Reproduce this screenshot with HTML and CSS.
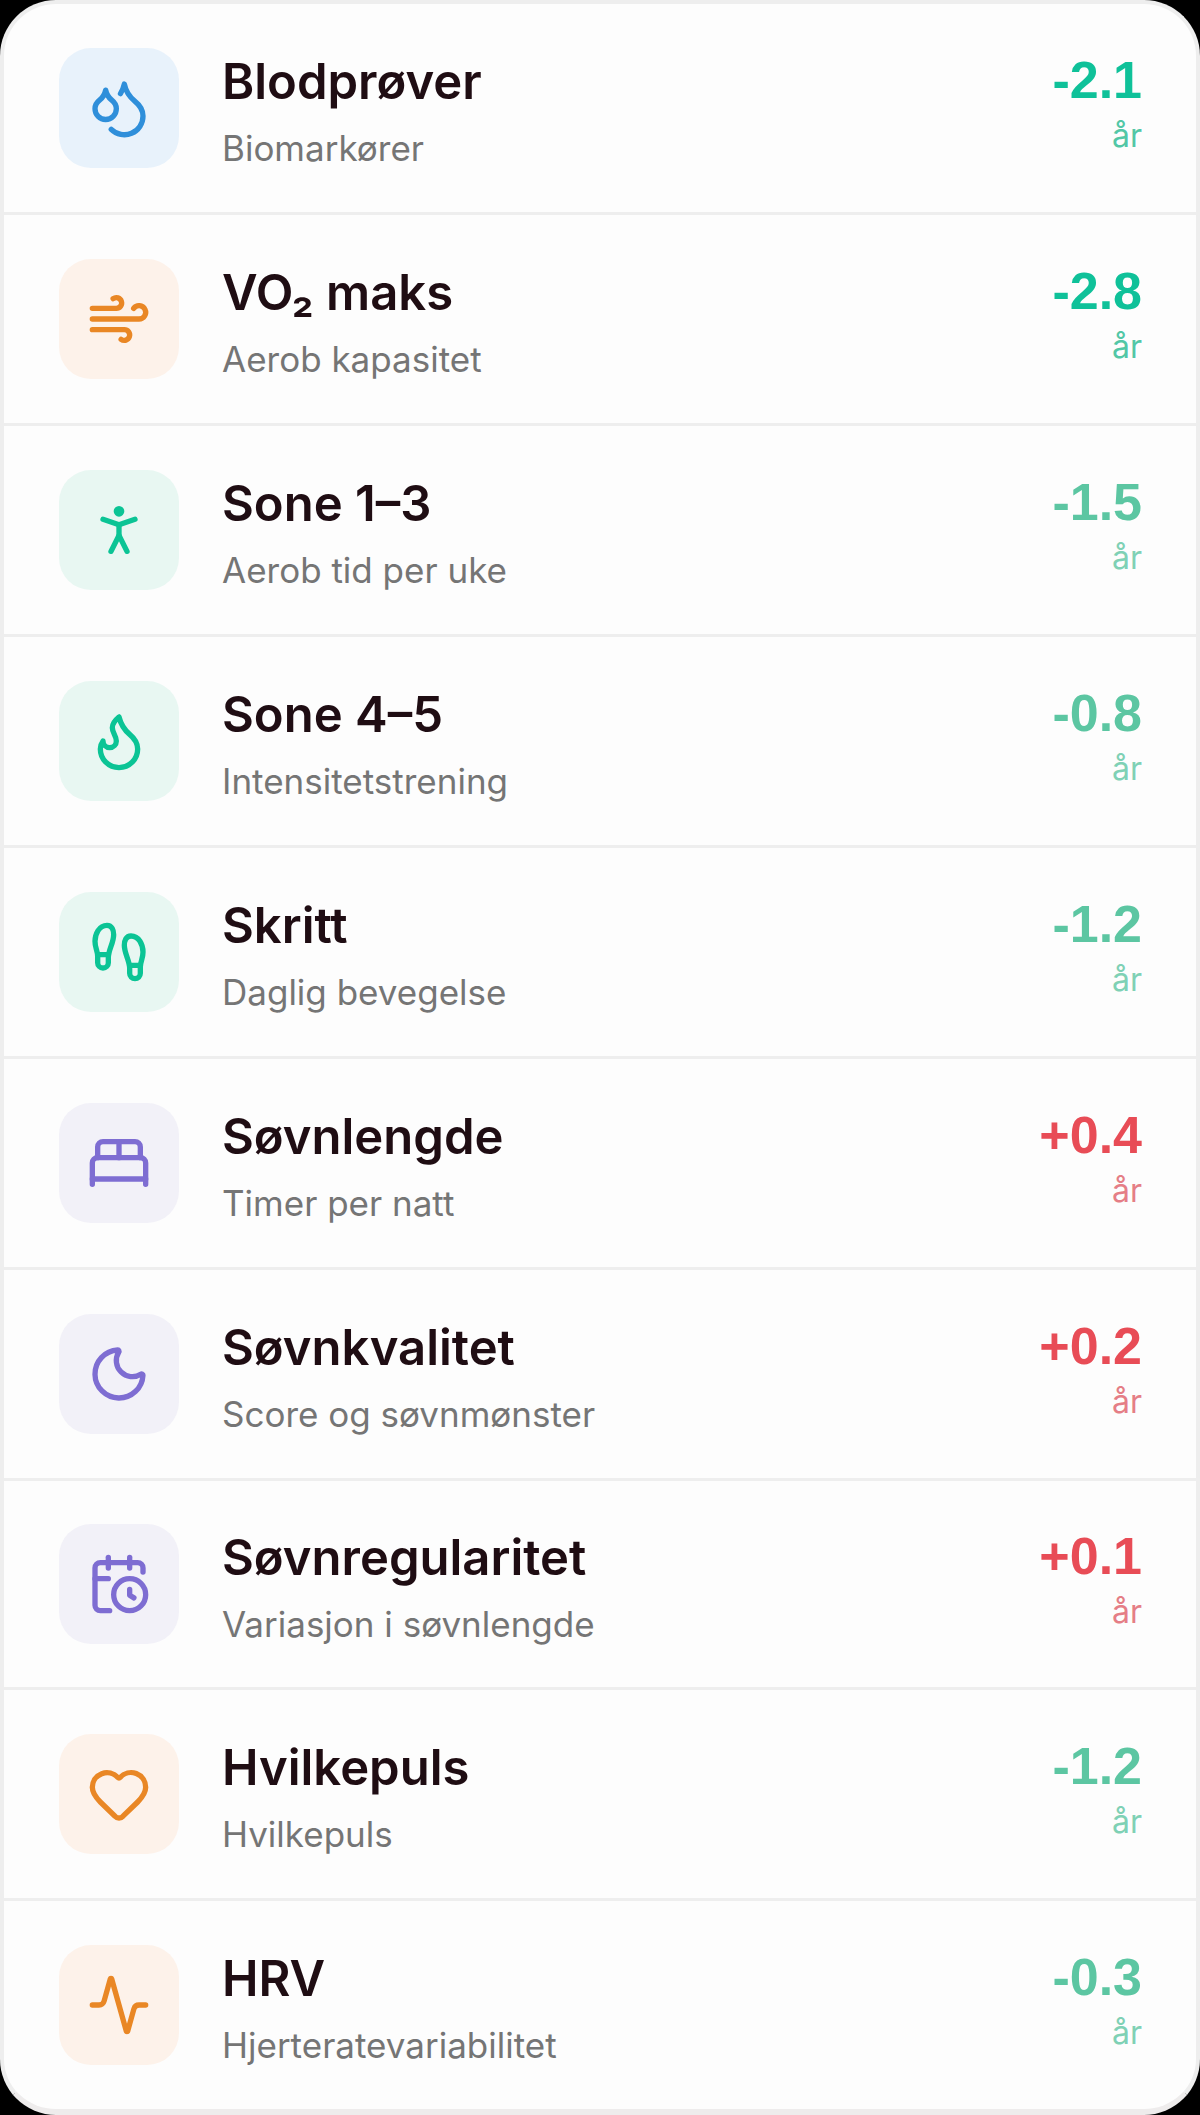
FILE: index.html
```html
<!DOCTYPE html>
<html lang="no">

<head>
    <meta charset="UTF-8">
    <meta name="viewport" content="width=device-width, initial-scale=1.0">
    <link rel="stylesheet" href="styles.css">
    <title>Biologisk alder</title>
</head>

<body>
    <ul class="card">
        <li class="row">
            <div class="icon blue">
                <svg viewBox="0 0 24 24">
                    <path d="M7 16.3c2.2 0 4-1.83 4-4.05 0-1.16-.57-2.26-1.71-3.19S7.29 6.75 7 5.3c-.29 1.45-1.14 2.84-2.29 3.76S3 11.1 3 12.25c0 2.22 1.8 4.05 4 4.05z" />
                    <path d="M12.56 6.6A10.97 10.97 0 0 0 14 3.02c.5 2.5 2 4.9 4 6.5s3 3.5 3 5.5a6.98 6.98 0 0 1-11.91 4.97" />
                </svg>
            </div>
            <div class="info">
                <h2>Blodprøver</h2>
                <p>Biomarkører</p>
            </div>
            <div class="value good">
                <strong>-2.1</strong>
                <span>år</span>
            </div>
        </li>
        <li class="row">
            <div class="icon orange">
                <svg viewBox="0 0 24 24">
                    <path d="M12.8 19.6A2 2 0 1 0 14 16H2" />
                    <path d="M17.5 8a2.5 2.5 0 1 1 2 4H2" />
                    <path d="M9.8 4.4A2 2 0 1 1 11 8H2" />
                </svg>
            </div>
            <div class="info">
                <h2>VO₂ maks</h2>
                <p>Aerob kapasitet</p>
            </div>
            <div class="value good">
                <strong>-2.8</strong>
                <span>år</span>
            </div>
        </li>
        <li class="row">
            <div class="icon green">
                <svg viewBox="0 0 24 24">
                    <circle cx="12" cy="5" r="1" />
                    <path d="m9 20 3-6 3 6" />
                    <path d="m6 8 6 2 6-2" />
                    <path d="M12 10v4" />
                </svg>
            </div>
            <div class="info">
                <h2>Sone 1–3</h2>
                <p>Aerob tid per uke</p>
            </div>
            <div class="value ok">
                <strong>-1.5</strong>
                <span>år</span>
            </div>
        </li>
        <li class="row">
            <div class="icon green">
                <svg viewBox="0 0 24 24">
                    <path d="M12 3q1 4 4 6.5t3 5.5a1 1 0 0 1-14 0 5 5 0 0 1 1-3 1 1 0 0 0 5 0c0-2-1.5-3-1.5-5q0-2 2.5-4" />
                </svg>
            </div>
            <div class="info">
                <h2>Sone 4–5</h2>
                <p>Intensitetstrening</p>
            </div>
            <div class="value ok">
                <strong>-0.8</strong>
                <span>år</span>
            </div>
        </li>
        <li class="row">
            <div class="icon green">
                <svg viewBox="0 0 24 24">
                    <path d="M4 16v-2.38C4 11.5 2.97 10.5 3 8c.03-2.72 1.49-6 4.5-6C9.37 2 10 3.8 10 5.5c0 3.11-2 5.66-2 8.68V16a2 2 0 1 1-4 0Z" />
                    <path d="M20 20v-2.38c0-2.12 1.03-3.12 1-5.62-.03-2.72-1.49-6-4.5-6C14.63 6 14 7.8 14 9.5c0 3.11 2 5.66 2 8.68V20a2 2 0 1 0 4 0Z" />
                    <path d="M16 17h4" />
                    <path d="M4 13h4" />
                </svg>
            </div>
            <div class="info">
                <h2>Skritt</h2>
                <p>Daglig bevegelse</p>
            </div>
            <div class="value ok">
                <strong>-1.2</strong>
                <span>år</span>
            </div>
        </li>
        <li class="row">
            <div class="icon purple">
                <svg viewBox="0 0 24 24">
                    <path d="M2 20v-8a2 2 0 0 1 2-2h16a2 2 0 0 1 2 2v8" />
                    <path d="M4 10V6a2 2 0 0 1 2-2h12a2 2 0 0 1 2 2v4" />
                    <path d="M12 4v6" />
                    <path d="M2 18h20" />
                </svg>
            </div>
            <div class="info">
                <h2>Søvnlengde</h2>
                <p>Timer per natt</p>
            </div>
            <div class="value bad">
                <strong>+0.4</strong>
                <span>år</span>
            </div>
        </li>
        <li class="row">
            <div class="icon purple">
                <svg viewBox="0 0 24 24">
                    <path d="M20.985 12.486a9 9 0 1 1-9.473-9.472c.405-.022.617.46.402.803a6 6 0 0 0 8.268 8.268c.344-.215.825-.004.803.401" />
                </svg>
            </div>
            <div class="info">
                <h2>Søvnkvalitet</h2>
                <p>Score og søvnmønster</p>
            </div>
            <div class="value bad">
                <strong>+0.2</strong>
                <span>år</span>
            </div>
        </li>
        <li class="row tight">
            <div class="icon purple">
                <svg viewBox="0 0 24 24">
                    <path d="M16 14v2.2l1.6 1" />
                    <path d="M16 2v4" />
                    <path d="M21 7.5V6a2 2 0 0 0-2-2H5a2 2 0 0 0-2 2v14a2 2 0 0 0 2 2h3.5" />
                    <path d="M3 10h5" />
                    <path d="M8 2v4" />
                    <circle cx="16" cy="16" r="6" />
                </svg>
            </div>
            <div class="info">
                <h2>Søvnregularitet</h2>
                <p>Variasjon i søvnlengde</p>
            </div>
            <div class="value bad">
                <strong>+0.1</strong>
                <span>år</span>
            </div>
        </li>
        <li class="row">
            <div class="icon orange">
                <svg viewBox="0 0 24 24">
                    <path d="M2 9.5a5.5 5.5 0 0 1 9.591-3.676.56.56 0 0 0 .818 0A5.49 5.49 0 0 1 22 9.5c0 2.29-1.5 4-3 5.5l-5.492 5.313a2 2 0 0 1-3 .019L5 15c-1.5-1.5-3-3.2-3-5.5" />
                </svg>
            </div>
            <div class="info">
                <h2>Hvilkepuls</h2>
                <p>Hvilkepuls</p>
            </div>
            <div class="value ok">
                <strong>-1.2</strong>
                <span>år</span>
            </div>
        </li>
        <li class="row">
            <div class="icon orange">
                <svg viewBox="0 0 24 24">
                    <path d="M22 12h-2.48a2 2 0 0 0-1.93 1.46l-2.35 8.36a.25.25 0 0 1-.48 0L9.24 2.18a.25.25 0 0 0-.48 0l-2.35 8.36A2 2 0 0 1 4.49 12H2" />
                </svg>
            </div>
            <div class="info">
                <h2>HRV</h2>
                <p>Hjerteratevariabilitet</p>
            </div>
            <div class="value ok">
                <strong>-0.3</strong>
                <span>år</span>
            </div>
        </li>
    </ul>
</body>

</html>
```
FILE: styles.css
```css
* {
    box-sizing: border-box;
    margin: 0;
    padding: 0;
}

body {
    background-color: #000;
    font-family: Inter, "Liberation Sans", sans-serif;
}

.card {
    list-style: none;
    background-color: #fdfdfd;
    border: 4px solid #eeeeee;
    border-bottom: 6px solid #eeecec;
    border-radius: 56px;
    overflow: hidden;
}

.row {
    display: flex;
    align-items: flex-start;
    gap: 43px;
    padding: 44px 54px 32px 55px;
    border-bottom: 3px solid #eeeeee;
}

.row:last-child {
    border-bottom: none;
}

.tight {
    padding-top: 43px;
    padding-bottom: 31px;
}

.icon {
    display: flex;
    flex: none;
    align-items: center;
    justify-content: center;
    width: 120px;
    height: 120px;
    border-radius: 32px;
}

.icon svg {
    width: 64px;
    height: 64px;
    fill: none;
    stroke: currentColor;
    stroke-width: 2;
    stroke-linecap: round;
    stroke-linejoin: round;
}

.blue {
    color: #2f8fda;
    background-color: #e8f2fb;
}

.orange {
    color: #e98725;
    background-color: #fdf2ea;
}

.green {
    color: #0bc495;
    background-color: #e8f7f2;
}

.purple {
    color: #7e6dd2;
    background-color: #f2f1f8;
}

.info {
    flex: 1;
}

.info h2 {
    color: #1f0d13;
    font-size: 49px;
    font-weight: 600;
    line-height: 68px;
}

.info p {
    color: #757575;
    font-size: 35px;
    line-height: 64px;
}

.value {
    text-align: right;
}

.value strong {
    display: block;
    font-family: "Liberation Sans", Arial, sans-serif;
    font-size: 52px;
    font-weight: 700;
    line-height: 64px;
}

.value span {
    display: block;
    font-size: 32px;
    line-height: 48px;
}

.good {
    color: #0fc199;
}

.good span {
    color: #52c7a6;
}

.ok {
    color: #5cc6a2;
}

.ok span {
    color: #7fd1b5;
}

.bad {
    color: #e84c56;
}

.bad span {
    color: #e57e86;
}
```
